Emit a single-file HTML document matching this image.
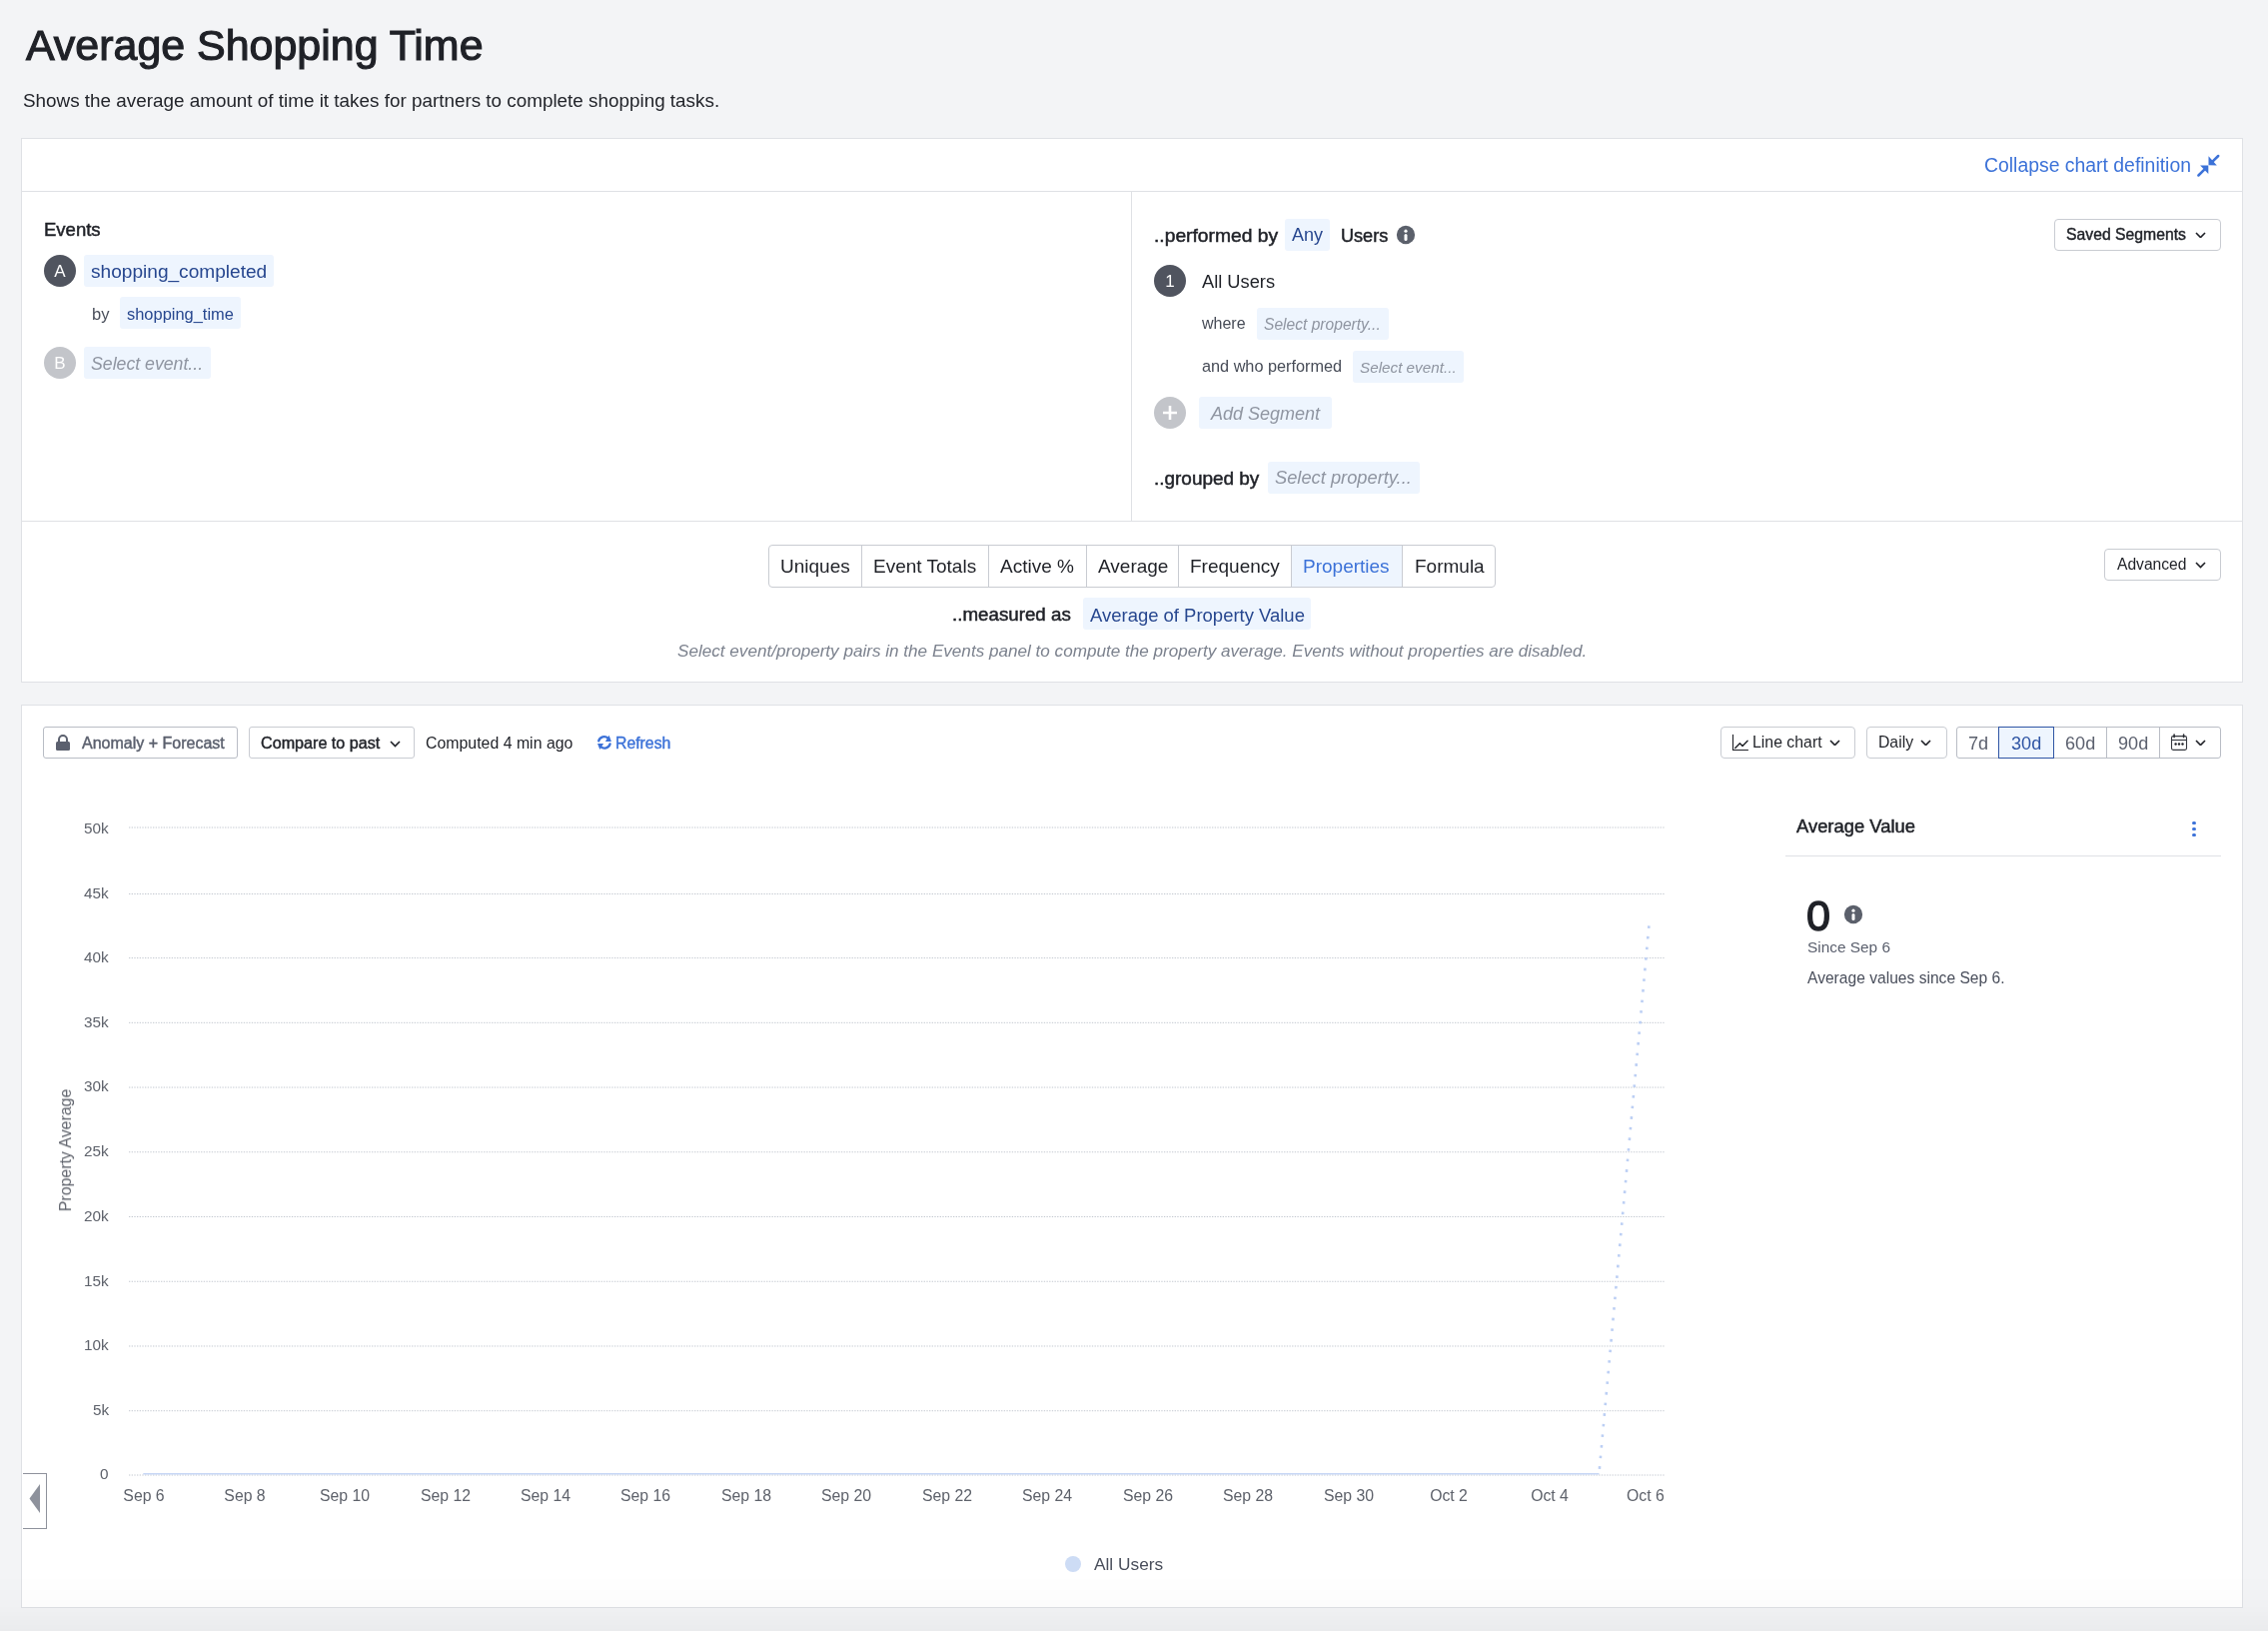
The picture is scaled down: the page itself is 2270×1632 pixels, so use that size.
<!DOCTYPE html>
<html><head><meta charset="utf-8"><style>
html,body{margin:0;padding:0;}
body{width:2270px;height:1632px;position:relative;overflow:hidden;background:#f3f4f6;font-family:"Liberation Sans",sans-serif;}
.t{position:absolute;white-space:nowrap;line-height:1;will-change:transform;}
.b{position:absolute;}
</style></head><body>
<div class="t" style="left:26.10px;top:24px;font-size:42.95px;color:#1f2127;-webkit-text-stroke:1.16px #1f2127;">Average Shopping Time</div>
<div class="t" style="left:23.20px;top:92px;font-size:18.88px;color:#23252b;">Shows the average amount of time it takes for partners to complete shopping tasks.</div>
<div class="b" style="left:21px;top:138px;width:2224px;height:545px;background:#fff;border:1px solid #dfe1e5;box-sizing:border-box;"></div>
<div class="b" style="left:22px;top:191px;width:2222px;height:1px;background:#dfe1e5;"></div>
<div class="b" style="left:1132px;top:192px;width:1px;height:329px;background:#dfe1e5;"></div>
<div class="b" style="left:22px;top:521px;width:2222px;height:1px;background:#dfe1e5;"></div>
<div class="t" style="left:1985.50px;top:156px;font-size:19.4px;color:#3c72d8;">Collapse chart definition</div>
<svg class="b" style="left:2198px;top:152px;" width="26" height="26" viewBox="0 0 26 26"><g stroke="#3c72d8" stroke-width="2.5" fill="#3c72d8" stroke-linecap="round"><line x1="22.2" y1="4" x2="16" y2="10.2"/><path d="M12.5 4.3 L12.5 13.2 L20.8 13.6 Z" stroke="none"/><line x1="2.4" y1="23.5" x2="8.6" y2="17.3"/><path d="M12.3 22 L12.3 13.5 L4.1 13.4 Z" stroke="none"/></g></svg>
<div class="b" style="left:2056px;top:219px;width:167px;height:32px;border:1px solid #c9ccd2;border-radius:4px;box-sizing:border-box;background:#fff;"></div>
<div class="t" style="left:2067.50px;top:227px;font-size:15.75px;color:#1f2127;-webkit-text-stroke:0.43px #1f2127;">Saved Segments</div>
<svg class="b" style="left:2196.5px;top:231.5px;" width="11" height="6.6" viewBox="0 0 11 6.6"><polyline points="1,1 5.5,5.6 10,1" fill="none" stroke="#1f2127" stroke-width="1.6"/></svg>
<div class="t" style="left:43.50px;top:221px;font-size:18.5px;color:#1f2127;-webkit-text-stroke:0.50px #1f2127;">Events</div>
<div class="b" style="left:44px;top:255px;width:32px;height:32px;background:#50545f;border-radius:50%;"></div>
<div class="t" style="left:44px;top:256px;width:32px;height:32px;line-height:32px;text-align:center;font-size:17px;color:#fff;">A</div>
<div class="b" style="left:84px;top:255px;width:190px;height:32px;background:#eef5fe;border-radius:3px;"></div>
<div class="t" style="left:91.00px;top:262px;font-size:19.1px;color:#27478f;">shopping_completed</div>
<div class="t" style="left:92.00px;top:306px;font-size:16.5px;color:#4a4f5b;">by</div>
<div class="b" style="left:120px;top:297px;width:121px;height:32px;background:#eef5fe;border-radius:3px;"></div>
<div class="t" style="left:126.50px;top:306px;font-size:16.45px;color:#27478f;">shopping_time</div>
<div class="b" style="left:44px;top:347px;width:32px;height:32px;background:#c3c5ca;border-radius:50%;"></div>
<div class="t" style="left:44px;top:348px;width:32px;height:32px;line-height:32px;text-align:center;font-size:17px;color:#fff;">B</div>
<div class="b" style="left:84px;top:347px;width:127px;height:32px;background:#eef5fe;border-radius:3px;"></div>
<div class="t" style="left:91.00px;top:356px;font-size:17.7px;color:#8f95a1;font-style:italic;">Select event...</div>
<div class="t" style="left:1155.00px;top:226px;font-size:19.25px;color:#1f2127;-webkit-text-stroke:0.52px #1f2127;">..performed by</div>
<div class="b" style="left:1286px;top:219px;width:45px;height:32px;background:#eef5fe;border-radius:3px;"></div>
<div class="t" style="left:1293.30px;top:226px;font-size:18.0px;color:#27478f;">Any</div>
<div class="t" style="left:1341.70px;top:227px;font-size:18.1px;color:#1f2127;-webkit-text-stroke:0.49px #1f2127;">Users</div>
<svg class="b" style="left:1396.6px;top:225.4px;" width="20" height="20" viewBox="0 0 20 20"><circle cx="10" cy="10" r="9.15" fill="#5b606b"/><circle cx="10" cy="6.2" r="1.6" fill="#fff"/><path d="M10 10.5 V14.6" stroke="#fff" stroke-width="3" stroke-linecap="round"/></svg>
<div class="b" style="left:1155px;top:265px;width:32px;height:32px;background:#50545f;border-radius:50%;"></div>
<div class="t" style="left:1155px;top:266px;width:32px;height:32px;line-height:32px;text-align:center;font-size:17px;color:#fff;">1</div>
<div class="t" style="left:1203.00px;top:273px;font-size:18.25px;color:#1f2127;">All Users</div>
<div class="t" style="left:1203.00px;top:316px;font-size:16.0px;color:#474c57;">where</div>
<div class="b" style="left:1258px;top:308px;width:132px;height:32px;background:#eef5fe;border-radius:3px;"></div>
<div class="t" style="left:1265.00px;top:317px;font-size:15.6px;color:#8f95a1;font-style:italic;">Select property...</div>
<div class="t" style="left:1203.00px;top:358px;font-size:16.25px;color:#474c57;">and who performed</div>
<div class="b" style="left:1354px;top:351px;width:111px;height:32px;background:#eef5fe;border-radius:3px;"></div>
<div class="t" style="left:1360.70px;top:360px;font-size:15.25px;color:#8f95a1;font-style:italic;">Select event...</div>
<div class="b" style="left:1155px;top:397px;width:32px;height:32px;background:#c3c5ca;border-radius:50%;"></div>
<svg class="b" style="left:1155px;top:397px;" width="32" height="32" viewBox="0 0 32 32"><path d="M16 9 V23 M9 16 H23" stroke="#fff" stroke-width="2.6"/></svg>
<div class="b" style="left:1200px;top:397px;width:133px;height:32px;background:#eef5fe;border-radius:3px;"></div>
<div class="t" style="left:1212.00px;top:405px;font-size:18.0px;color:#8f95a1;font-style:italic;">Add Segment</div>
<div class="t" style="left:1155.00px;top:470px;font-size:18.95px;color:#1f2127;-webkit-text-stroke:0.51px #1f2127;">..grouped by</div>
<div class="b" style="left:1269px;top:462px;width:152px;height:32px;background:#eef5fe;border-radius:3px;"></div>
<div class="t" style="left:1276.00px;top:469px;font-size:18.3px;color:#8f95a1;font-style:italic;">Select property...</div>
<div class="b" style="left:769px;top:545px;width:728px;height:43px;border:1px solid #c9ccd2;border-radius:4px;box-sizing:border-box;background:#fff;"></div>
<div class="b" style="left:1292px;top:546px;width:111px;height:41px;background:#eef5fe;"></div>
<div class="t" style="left:781.00px;top:557px;font-size:19.0px;color:#1f2127;">Uniques</div>
<div class="b" style="left:862px;top:546px;width:1px;height:41px;background:#c9ccd2;"></div>
<div class="t" style="left:873.80px;top:557px;font-size:19.0px;color:#1f2127;">Event Totals</div>
<div class="b" style="left:989px;top:546px;width:1px;height:41px;background:#c9ccd2;"></div>
<div class="t" style="left:1001.20px;top:557px;font-size:19.0px;color:#1f2127;">Active %</div>
<div class="b" style="left:1087px;top:546px;width:1px;height:41px;background:#c9ccd2;"></div>
<div class="t" style="left:1099.00px;top:557px;font-size:19.0px;color:#1f2127;">Average</div>
<div class="b" style="left:1179px;top:546px;width:1px;height:41px;background:#c9ccd2;"></div>
<div class="t" style="left:1191.20px;top:557px;font-size:19.0px;color:#1f2127;">Frequency</div>
<div class="b" style="left:1292px;top:546px;width:1px;height:41px;background:#c9ccd2;"></div>
<div class="t" style="left:1303.80px;top:557px;font-size:19.0px;color:#3c72d8;">Properties</div>
<div class="b" style="left:1403px;top:546px;width:1px;height:41px;background:#c9ccd2;"></div>
<div class="t" style="left:1415.60px;top:557px;font-size:19.0px;color:#1f2127;">Formula</div>
<div class="t" style="left:953.30px;top:606px;font-size:18.75px;color:#1f2127;-webkit-text-stroke:0.51px #1f2127;">..measured as</div>
<div class="b" style="left:1084px;top:598px;width:228px;height:32px;background:#eef5fe;border-radius:3px;"></div>
<div class="t" style="left:1091.00px;top:607px;font-size:18.48px;color:#27478f;">Average of Property Value</div>
<div class="t" style="left:677.80px;top:643px;font-size:17.11px;color:#7c828e;font-style:italic;">Select event/property pairs in the Events panel to compute the property average. Events without properties are disabled.</div>
<div class="b" style="left:2106px;top:549px;width:117px;height:32px;border:1px solid #c9ccd2;border-radius:4px;box-sizing:border-box;background:#fff;"></div>
<div class="t" style="left:2119.00px;top:557px;font-size:15.63px;color:#1f2127;">Advanced</div>
<svg class="b" style="left:2196.5px;top:562px;" width="11" height="6.6" viewBox="0 0 11 6.6"><polyline points="1,1 5.5,5.6 10,1" fill="none" stroke="#1f2127" stroke-width="1.6"/></svg>
<div class="b" style="left:21px;top:705px;width:2224px;height:904px;background:#fff;border:1px solid #dfe1e5;box-sizing:border-box;"></div>
<div class="b" style="left:43px;top:727px;width:195px;height:32px;border:1px solid #b9bdc5;border-radius:3px;box-sizing:border-box;"></div>
<svg class="b" style="left:55px;top:735px;" width="16" height="16" viewBox="0 0 16 16"><path d="M4 7 V5 A4 4 0 0 1 12 5 V7" fill="none" stroke="#5b606e" stroke-width="2"/><rect x="1" y="7" width="14" height="9" rx="1.5" fill="#5b606e"/></svg>
<div class="t" style="left:81.60px;top:736px;font-size:16.0px;color:#5b606e;-webkit-text-stroke:0.43px #5b606e;">Anomaly + Forecast</div>
<div class="b" style="left:249px;top:727px;width:166px;height:32px;border:1px solid #c9ccd2;border-radius:3px;box-sizing:border-box;"></div>
<div class="t" style="left:260.60px;top:735px;font-size:16.15px;color:#1f2127;-webkit-text-stroke:0.44px #1f2127;">Compare to past</div>
<svg class="b" style="left:389.5px;top:741px;" width="11" height="6.6" viewBox="0 0 11 6.6"><polyline points="1,1 5.5,5.6 10,1" fill="none" stroke="#1f2127" stroke-width="1.6"/></svg>
<div class="t" style="left:426.00px;top:736px;font-size:15.89px;color:#1f2127;">Computed 4 min ago</div>
<svg class="b" style="left:592px;top:730px;" width="26" height="26" viewBox="0 0 26 26"><path d="M7.2 11.4 A5.8 5.8 0 0 1 16.6 8.6" fill="none" stroke="#3c72d8" stroke-width="2.3" stroke-linecap="round"/><path d="M17.6 5.8 L19.9 11.9 L13.9 11.9 Z" fill="#3c72d8"/><path d="M18.6 14.4 A5.8 5.8 0 0 1 9.2 17.2" fill="none" stroke="#3c72d8" stroke-width="2.3" stroke-linecap="round"/><path d="M6.1 13.9 L12.1 13.9 L8.3 20.1 Z" fill="#3c72d8"/></svg>
<div class="t" style="left:615.50px;top:736px;font-size:15.8px;color:#3c72d8;-webkit-text-stroke:0.43px #3c72d8;">Refresh</div>
<div class="b" style="left:1722px;top:727px;width:135px;height:32px;border:1px solid #c9ccd2;border-radius:4px;box-sizing:border-box;"></div>
<svg class="b" style="left:1728px;top:728px;" width="28" height="28" viewBox="0 0 28 28"><path d="M6.5 7.2 V22.5 H21.5" fill="none" stroke="#1f2127" stroke-width="1.1" stroke-linecap="round"/><polyline points="8.75,20.4 13.4,15.8 16.05,18.5 21.1,13.2" fill="none" stroke="#1f2127" stroke-width="1.4" stroke-linecap="round" stroke-linejoin="round"/></svg>
<div class="t" style="left:1753.50px;top:735px;font-size:15.85px;color:#1f2127;">Line chart</div>
<svg class="b" style="left:1831px;top:739.9px;" width="11" height="6.6" viewBox="0 0 11 6.6"><polyline points="1,1 5.5,5.6 10,1" fill="none" stroke="#1f2127" stroke-width="1.6"/></svg>
<div class="b" style="left:1868px;top:727px;width:81px;height:32px;border:1px solid #c9ccd2;border-radius:4px;box-sizing:border-box;"></div>
<div class="t" style="left:1880.40px;top:735px;font-size:15.75px;color:#1f2127;">Daily</div>
<svg class="b" style="left:1922px;top:739.9px;" width="11" height="6.6" viewBox="0 0 11 6.6"><polyline points="1,1 5.5,5.6 10,1" fill="none" stroke="#1f2127" stroke-width="1.6"/></svg>
<div class="b" style="left:1958px;top:727px;width:265px;height:32px;border:1px solid #b9bdc5;border-radius:3px;box-sizing:border-box;"></div>
<div class="b" style="left:2108px;top:728px;width:1px;height:30px;background:#b9bdc5;"></div>
<div class="b" style="left:2161px;top:728px;width:1px;height:30px;background:#b9bdc5;"></div>
<div class="b" style="left:2000px;top:727px;width:56px;height:32px;background:#eef5fe;border:1.5px solid #2f55a4;box-sizing:border-box;"></div>
<div class="t" style="left:1970.00px;top:735px;font-size:18.1px;color:#5b606e;">7d</div>
<div class="t" style="left:2013.30px;top:735px;font-size:18.1px;color:#2f55a4;">30d</div>
<div class="t" style="left:2066.80px;top:735px;font-size:18.1px;color:#5b606e;">60d</div>
<div class="t" style="left:2120.40px;top:735px;font-size:18.1px;color:#5b606e;">90d</div>
<svg class="b" style="left:2166px;top:728px;" width="28" height="28" viewBox="0 0 28 28"><rect x="7.5" y="8.6" width="15" height="13.8" rx="1.6" fill="none" stroke="#35383f" stroke-width="1.1"/><line x1="7.5" y1="12.5" x2="22.5" y2="12.5" stroke="#35383f" stroke-width="1.1"/><line x1="10.1" y1="7" x2="10.1" y2="9.6" stroke="#2b2e34" stroke-width="1.6" stroke-linecap="round"/><line x1="19.6" y1="7" x2="19.6" y2="9.6" stroke="#2b2e34" stroke-width="1.6" stroke-linecap="round"/><circle cx="11.6" cy="16.5" r="1.2" fill="#1f2127"/><circle cx="15" cy="16.5" r="1.2" fill="#1f2127"/><circle cx="18.5" cy="16.5" r="1.2" fill="#1f2127"/></svg>
<svg class="b" style="left:2196.5px;top:739.9px;" width="11" height="6.6" viewBox="0 0 11 6.6"><polyline points="1,1 5.5,5.6 10,1" fill="none" stroke="#1f2127" stroke-width="1.6"/></svg>
<svg class="b" style="left:0px;top:0px;" width="1700" height="1632" viewBox="0 0 1700 1632"><line x1="129" y1="828.00" x2="1666" y2="828.00" stroke="#c3c8d0" stroke-width="1" stroke-dasharray="1.33 1.34"/><line x1="129" y1="894.50" x2="1666" y2="894.50" stroke="#c3c8d0" stroke-width="1" stroke-dasharray="1.33 1.34"/><line x1="129" y1="958.60" x2="1666" y2="958.60" stroke="#c3c8d0" stroke-width="1" stroke-dasharray="1.33 1.34"/><line x1="129" y1="1023.33" x2="1666" y2="1023.33" stroke="#c3c8d0" stroke-width="1" stroke-dasharray="1.33 1.34"/><line x1="129" y1="1088.06" x2="1666" y2="1088.06" stroke="#c3c8d0" stroke-width="1" stroke-dasharray="1.33 1.34"/><line x1="129" y1="1152.79" x2="1666" y2="1152.79" stroke="#c3c8d0" stroke-width="1" stroke-dasharray="1.33 1.34"/><line x1="129" y1="1217.52" x2="1666" y2="1217.52" stroke="#c3c8d0" stroke-width="1" stroke-dasharray="1.33 1.34"/><line x1="129" y1="1282.25" x2="1666" y2="1282.25" stroke="#c3c8d0" stroke-width="1" stroke-dasharray="1.33 1.34"/><line x1="129" y1="1346.98" x2="1666" y2="1346.98" stroke="#c3c8d0" stroke-width="1" stroke-dasharray="1.33 1.34"/><line x1="129" y1="1411.71" x2="1666" y2="1411.71" stroke="#c3c8d0" stroke-width="1" stroke-dasharray="1.33 1.34"/><line x1="129" y1="1476.00" x2="1666" y2="1476.00" stroke="#c3c8d0" stroke-width="1" stroke-dasharray="1.33 1.34"/></svg>
<div class="t" style="right:2161.00px;top:821px;font-size:15.3px;color:#5e626b;">50k</div>
<div class="t" style="right:2161.00px;top:886px;font-size:15.3px;color:#5e626b;">45k</div>
<div class="t" style="right:2161.00px;top:950px;font-size:15.3px;color:#5e626b;">40k</div>
<div class="t" style="right:2161.00px;top:1015px;font-size:15.3px;color:#5e626b;">35k</div>
<div class="t" style="right:2161.00px;top:1079px;font-size:15.3px;color:#5e626b;">30k</div>
<div class="t" style="right:2161.00px;top:1144px;font-size:15.3px;color:#5e626b;">25k</div>
<div class="t" style="right:2161.00px;top:1209px;font-size:15.3px;color:#5e626b;">20k</div>
<div class="t" style="right:2161.00px;top:1274px;font-size:15.3px;color:#5e626b;">15k</div>
<div class="t" style="right:2161.00px;top:1338px;font-size:15.3px;color:#5e626b;">10k</div>
<div class="t" style="right:2161.00px;top:1403px;font-size:15.3px;color:#5e626b;">5k</div>
<div class="t" style="right:2161.00px;top:1467px;font-size:15.3px;color:#5e626b;">0</div>
<div class="t" style="left:66px;top:1151px;font-size:15.9px;color:#5e626b;transform:translate(-50%,-50%) rotate(-90deg);white-space:nowrap;line-height:1;">Property Average</div>
<div class="t" style="left:-5.80px;width:300px;text-align:center;top:1489px;font-size:15.8px;color:#5e626b;">Sep 6</div>
<div class="t" style="left:94.65px;width:300px;text-align:center;top:1489px;font-size:15.8px;color:#5e626b;">Sep 8</div>
<div class="t" style="left:195.10px;width:300px;text-align:center;top:1489px;font-size:15.8px;color:#5e626b;">Sep 10</div>
<div class="t" style="left:295.55px;width:300px;text-align:center;top:1489px;font-size:15.8px;color:#5e626b;">Sep 12</div>
<div class="t" style="left:396.00px;width:300px;text-align:center;top:1489px;font-size:15.8px;color:#5e626b;">Sep 14</div>
<div class="t" style="left:496.45px;width:300px;text-align:center;top:1489px;font-size:15.8px;color:#5e626b;">Sep 16</div>
<div class="t" style="left:596.90px;width:300px;text-align:center;top:1489px;font-size:15.8px;color:#5e626b;">Sep 18</div>
<div class="t" style="left:697.35px;width:300px;text-align:center;top:1489px;font-size:15.8px;color:#5e626b;">Sep 20</div>
<div class="t" style="left:797.80px;width:300px;text-align:center;top:1489px;font-size:15.8px;color:#5e626b;">Sep 22</div>
<div class="t" style="left:898.25px;width:300px;text-align:center;top:1489px;font-size:15.8px;color:#5e626b;">Sep 24</div>
<div class="t" style="left:998.70px;width:300px;text-align:center;top:1489px;font-size:15.8px;color:#5e626b;">Sep 26</div>
<div class="t" style="left:1099.15px;width:300px;text-align:center;top:1489px;font-size:15.8px;color:#5e626b;">Sep 28</div>
<div class="t" style="left:1199.60px;width:300px;text-align:center;top:1489px;font-size:15.8px;color:#5e626b;">Sep 30</div>
<div class="t" style="left:1300.05px;width:300px;text-align:center;top:1489px;font-size:15.8px;color:#5e626b;">Oct 2</div>
<div class="t" style="left:1400.50px;width:300px;text-align:center;top:1489px;font-size:15.8px;color:#5e626b;">Oct 4</div>
<div class="t" style="right:604.50px;top:1489px;font-size:15.8px;color:#5e626b;">Oct 6</div>
<svg class="b" style="left:0px;top:0px;" width="1700" height="1632" viewBox="0 0 1700 1632"><polyline points="143.3,1474.8 1600.5,1474.8" fill="none" stroke="#c6d6f5" stroke-width="1.4"/><line x1="1650.4" y1="926.3" x2="1600.5" y2="1474" stroke="#bccff4" stroke-width="2.6" stroke-dasharray="2.6 8.05"/></svg>
<div class="b" style="left:23px;top:1474px;width:24px;height:56px;border:1px solid #8e929c;border-left:none;box-sizing:border-box;background:#fff;"></div>
<svg class="b" style="left:29px;top:1485px;" width="12" height="29" viewBox="0 0 12 29"><path d="M11 0 L0.5 14.5 L11 29 Z" fill="#8e929c"/></svg>
<div class="b" style="left:1066px;top:1557px;width:16px;height:16px;background:#cddcf5;border-radius:50%;"></div>
<div class="t" style="left:1095.40px;top:1557px;font-size:17.3px;color:#4a4f5c;">All Users</div>
<div class="t" style="left:1798.30px;top:818px;font-size:18.4px;color:#1f2127;-webkit-text-stroke:0.50px #1f2127;">Average Value</div>
<div class="b" style="left:2194px;top:821.5px;width:3.5px;height:3.5px;background:#3c72d8;border-radius:50%;"></div>
<div class="b" style="left:2194px;top:827.5px;width:3.5px;height:3.5px;background:#3c72d8;border-radius:50%;"></div>
<div class="b" style="left:2194px;top:833.5px;width:3.5px;height:3.5px;background:#3c72d8;border-radius:50%;"></div>
<div class="b" style="left:1787px;top:856px;width:436px;height:1px;background:#dfe1e5;"></div>
<div class="t" style="left:1808.30px;top:895px;font-size:43.2px;color:#1f2127;-webkit-text-stroke:1.3px #1f2127;">0</div>
<svg class="b" style="left:1845.3px;top:905.2px;" width="20" height="20" viewBox="0 0 20 20"><circle cx="10" cy="10" r="9.15" fill="#5b606b"/><circle cx="10" cy="6.2" r="1.6" fill="#fff"/><path d="M10 10.5 V14.6" stroke="#fff" stroke-width="3" stroke-linecap="round"/></svg>
<div class="t" style="left:1809.00px;top:940px;font-size:15.4px;color:#5b606e;">Since Sep 6</div>
<div class="t" style="left:1809.00px;top:971px;font-size:15.62px;color:#4a4f5c;">Average values since Sep 6.</div>
<div class="b" style="left:0;top:1575px;width:2270px;height:57px;background:linear-gradient(to bottom, rgba(0,0,0,0) 0%, rgba(0,0,0,0.012) 55%, rgba(0,0,0,0.035) 100%);"></div>
</body></html>
